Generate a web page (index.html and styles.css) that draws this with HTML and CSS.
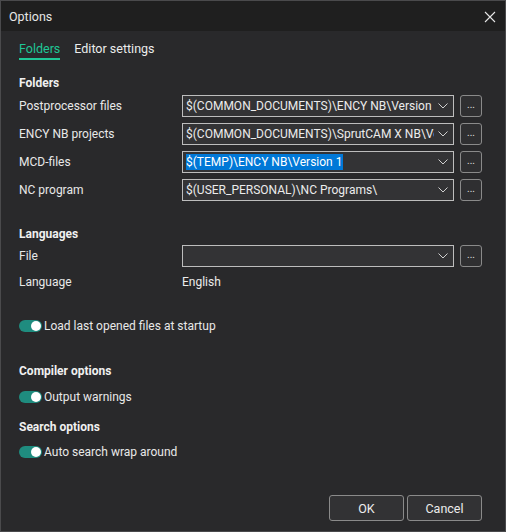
FILE: index.html
```html
<!DOCTYPE html>
<html>
<head>
<meta charset="utf-8">
<link rel="stylesheet" href="styles.css">
</head>
<body>
<div class="window">
  <div class="titlebar">
    <span class="title">Options</span>
    <svg class="close" width="12" height="12" viewBox="0 0 12 12"><path d="M1 1L11 11M11 1L1 11" stroke="#e6e6e6" stroke-width="1.1" fill="none"/></svg>
  </div>
  <div class="content">
    <div class="tabs">
      <span class="tab active">Folders</span>
      <span class="tab">Editor settings</span>
    </div>

    <div class="heading h-folders">Folders</div>
    <div class="rows">
      <div class="row">
        <span class="label">Postprocessor files</span>
        <div class="combo"><span class="ctext">$(COMMON_DOCUMENTS)\ENCY NB\Version 1</span><svg class="chev" width="10" height="6" viewBox="0 0 10 6"><path d="M0.5 0.5L5 5L9.5 0.5" stroke="#d0d0d0" fill="none"/></svg></div>
        <div class="dots">...</div>
      </div>
      <div class="row">
        <span class="label">ENCY NB projects</span>
        <div class="combo"><span class="ctext">$(COMMON_DOCUMENTS)\SprutCAM X NB\Version 1</span><svg class="chev" width="10" height="6" viewBox="0 0 10 6"><path d="M0.5 0.5L5 5L9.5 0.5" stroke="#d0d0d0" fill="none"/></svg></div>
        <div class="dots">...</div>
      </div>
      <div class="row">
        <span class="label">MCD-files</span>
        <div class="combo"><span class="ctext"><span class="sel">$(TEMP)\ENCY NB\Version 1</span></span><svg class="chev" width="10" height="6" viewBox="0 0 10 6"><path d="M0.5 0.5L5 5L9.5 0.5" stroke="#d0d0d0" fill="none"/></svg></div>
        <div class="dots">...</div>
      </div>
      <div class="row">
        <span class="label">NC program</span>
        <div class="combo"><span class="ctext">$(USER_PERSONAL)\NC Programs\</span><svg class="chev" width="10" height="6" viewBox="0 0 10 6"><path d="M0.5 0.5L5 5L9.5 0.5" stroke="#d0d0d0" fill="none"/></svg></div>
        <div class="dots">...</div>
      </div>
    </div>

    <div class="heading h-lang">Languages</div>
    <div class="row row-file">
      <span class="label">File</span>
      <div class="combo"><span class="ctext"></span><svg class="chev" width="10" height="6" viewBox="0 0 10 6"><path d="M0.5 0.5L5 5L9.5 0.5" stroke="#d0d0d0" fill="none"/></svg></div>
      <div class="dots">...</div>
    </div>
    <div class="row row-lang">
      <span class="label">Language</span>
      <span class="value">English</span>
    </div>

    <div class="toggle-row t-load"><span class="toggle"><span class="knob"></span></span><span>Load last opened files at startup</span></div>

    <div class="heading h-comp">Compiler options</div>
    <div class="toggle-row t-warn"><span class="toggle"><span class="knob"></span></span><span>Output warnings</span></div>

    <div class="heading h-search">Search options</div>
    <div class="toggle-row t-wrap"><span class="toggle"><span class="knob"></span></span><span>Auto search wrap around</span></div>
  </div>
  <div class="footer">
    <button class="btn">OK</button>
    <button class="btn">Cancel</button>
  </div>
</div>
</body>
</html>
```

FILE: styles.css
```css
* { box-sizing: border-box; }
html, body { margin: 0; padding: 0; background: #29292b; }
body {
  font-family: Roboto, "Liberation Sans", sans-serif;
  font-size: 12px;
  color: #e8e8e8;
}
.window {
  width: 506px;
  height: 532px;
  border: 1px solid #4a4a4c;
  background: #29292b;
  display: flex;
  flex-direction: column;
}
.titlebar {
  height: 30px;
  background: #1f1f1f;
  display: flex;
  align-items: center;
  justify-content: space-between;
  padding: 0 9px 0 8px;
  flex-shrink: 0;
}
.title { font-size: 12.5px; color: #e6e6e6; }
.close { display: block; margin-top: 1px; }
.content {
  padding: 0 23px 0 18px;
  display: flex;
  flex-direction: column;
}
.tabs {
  margin-top: 10px;
  display: flex;
  gap: 14px;
  height: 19px;
}
.tab {
  line-height: 16px;
  height: 19px;
  color: #ececec;
  font-size: 12.5px;
}
.tab.active {
  color: #1fc796;
  border-bottom: 2px solid #1fc796;
  padding-bottom: 1px;
}
.heading {
  font-weight: 700;
  line-height: 16px;
  font-size: 12px;
  color: #f0f0f0;
}
.h-folders { margin-top: 15px; }
.rows {
  margin-top: 4px;
  display: flex;
  flex-direction: column;
  gap: 6px;
}
.row {
  display: flex;
  align-items: center;
  height: 22px;
}
.label { width: 163px; flex-shrink: 0; }
.combo {
  width: 272px;
  height: 22px;
  border: 1px solid #bdbdbd;
  background: #333335;
  display: flex;
  align-items: center;
  padding: 0 5px 0 3px;
  flex-shrink: 0;
}
.ctext {
  flex: 1;
  overflow: hidden;
  white-space: nowrap;
  line-height: 16px;
  color: #ececec;
}
.sel { background: #0078d7; color: #fff; padding: 1px 1px 1px 0; }
.chev { display: block; margin-left: 4px; flex-shrink: 0; }
.dots {
  width: 22px;
  height: 22px;
  margin-left: 6px;
  border: 1px solid #8a8a8a;
  border-radius: 3px;
  background: #2f2f31;
  display: flex;
  align-items: center;
  justify-content: center;
  font-size: 10px;
  line-height: 1;
  padding-bottom: 2px;
  color: #e0e0e0;
  flex-shrink: 0;
}
.h-lang { margin-top: 25px; }
.row-file { margin-top: 3px; }
.row-lang { margin-top: 4px; }
.value { color: #ececec; }
.toggle-row {
  display: flex;
  align-items: center;
  height: 22px;
  gap: 2px;
}
.t-load { margin-top: 22px; }
.h-comp { margin-top: 26px; }
.t-warn { margin-top: 7px; }
.h-search { margin-top: 11px; }
.t-wrap { margin-top: 6px; }
.toggle {
  width: 23px;
  height: 12px;
  border-radius: 6px;
  background: #1f8c7f;
  position: relative;
  flex-shrink: 0;
}
.knob {
  position: absolute;
  right: 1px;
  top: 1px;
  width: 10px;
  height: 10px;
  border-radius: 50%;
  background: #ffffff;
}
.footer {
  margin-top: auto;
  display: flex;
  justify-content: flex-end;
  gap: 3px;
  padding: 0 23px 10px 0;
}
.btn {
  width: 75px;
  height: 26px;
  border: 1px solid #8a8a8a;
  border-radius: 3px;
  background: #323234;
  color: #ececec;
  font-family: Roboto, "Liberation Sans", sans-serif;
  font-size: 12.5px;
  padding: 0;
}
```
